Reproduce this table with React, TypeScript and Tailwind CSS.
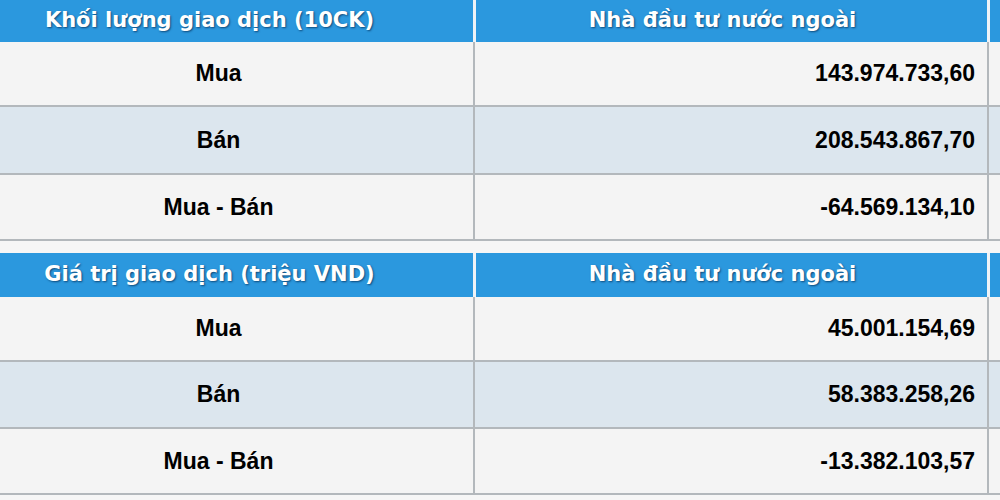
const tables = [
  {
    title: "Khối lượng giao dịch (10CK)",
    headerH: "h-[42px]",
    rows: [
      { label: "Mua", value: "143.974.733,60", h: "h-[63px]" },
      { label: "Bán", value: "208.543.867,70", h: "h-[66px]" },
      { label: "Mua - Bán", value: "-64.569.134,10", h: "h-[64px]" },
    ],
  },
  {
    title: "Giá trị giao dịch (triệu VND)",
    headerH: "h-[44px]",
    rows: [
      { label: "Mua", value: "45.001.154,69", h: "h-[63px]" },
      { label: "Bán", value: "58.383.258,26", h: "h-[65px]" },
      { label: "Mua - Bán", value: "-13.382.103,57", h: "h-[64px]" },
    ],
  },
];

const headFont = "font-['DejaVu_Sans',sans-serif] font-bold text-[21px] text-white [text-shadow:1px_1px_2px_rgba(0,40,80,0.7)]";
const bodyFont = "font-['Liberation_Sans',Arial,sans-serif] font-bold text-[23px] text-black";

function StatTable({ title, headerH, rows }: (typeof tables)[number]) {
  return (
    <div className="flex flex-col">
      <div className={`grid grid-cols-[473px_511px_1fr] gap-x-[3px] bg-[#eef3f7] ${headerH}`}>
        <div className={`flex items-center justify-center bg-[#2b98de] pr-[54px] ${headFont}`}>{title}</div>
        <div className={`flex items-center justify-center bg-[#2b98de] pr-[18px] ${headFont}`}>Nhà đầu tư nước ngoài</div>
        <div className="bg-[#2b98de]" />
      </div>
      <div className="flex flex-col gap-y-[2px] bg-[#b3b8bc] pb-[2px]">
        {rows.map((r, i) => (
          <div key={r.label} className={`grid grid-cols-[473px_512px_1fr] gap-x-[2px] ${r.h}`}>
            <div className={`flex items-center justify-center pr-[36px] ${i === 1 ? "bg-[#dce6ee]" : "bg-[#f4f4f4]"} ${bodyFont}`}>
              {r.label}
            </div>
            <div className={`flex items-center justify-end pr-[12px] ${i === 1 ? "bg-[#dce6ee]" : "bg-[#f4f4f4]"} ${bodyFont}`}>
              {r.value}
            </div>
            <div className={i === 1 ? "bg-[#dce6ee]" : "bg-[#f4f4f4]"} />
          </div>
        ))}
      </div>
    </div>
  );
}

export default function App() {
  return (
    <div className="w-[1000px] h-[500px] overflow-hidden bg-[#f6f6f6] flex flex-col gap-y-[12px]">
      {tables.map((t) => (
        <StatTable key={t.title} {...t} />
      ))}
    </div>
  );
}
